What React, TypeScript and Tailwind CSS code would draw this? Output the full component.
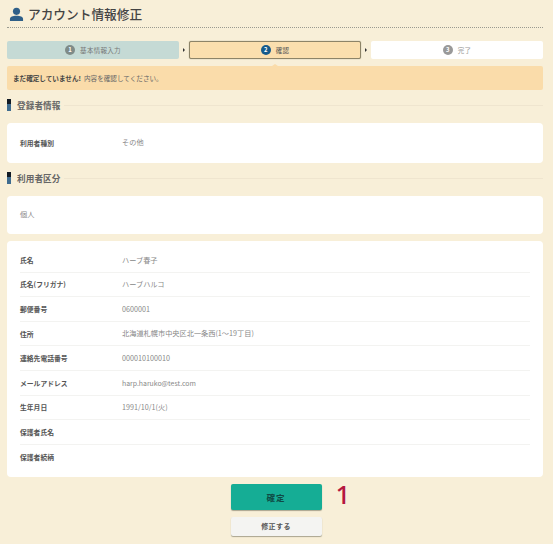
const font = { fontFamily: '"Noto Sans CJK JP", "Noto Sans", sans-serif' };

function Step({ n, label, cls, numCls, textCls }: { n: number; label: string; cls: string; numCls: string; textCls: string }) {
  return (
    <div className={`w-[172px] shrink-0 h-[18px] rounded-[2px] flex items-center justify-center gap-[5px] ${cls}`}>
      <span className={`w-[10px] h-[10px] rounded-full flex items-center justify-center text-white text-[6px] font-bold leading-none ${numCls}`}>{n}</span>
      <span className={`text-[6.5px] leading-none tracking-[0.3px] ${textCls}`}>{label}</span>
    </div>
  );
}

function Arrow() {
  return (
    <div className="w-[10px] flex items-center justify-center">
      <div className="w-0 h-0 border-y-[2px] border-y-transparent border-l-[2px] border-l-[#333]" />
    </div>
  );
}

function Section({ title, cls }: { title: string; cls: string }) {
  return (
    <div className={`flex items-center ${cls}`}>
      <div className="w-[4px] h-[12px] bg-gradient-to-b from-[#111a24] from-40% to-[#3f6c8f] to-45% mr-[6px]" />
      <span className="text-[8.6px] leading-none font-bold text-[#666] tracking-[0.1px]">{title}</span>
      <div className="flex-1 h-px bg-[#efe5cf] ml-[4px]" />
    </div>
  );
}

const rows: [string, string, string][] = [
  ['氏名', 'ハーブ春子', 'text-[7.2px]'],
  ['氏名(フリガナ)', 'ハーブハルコ', 'text-[7.2px]'],
  ['郵便番号', '0600001', 'text-[7.2px]'],
  ['住所', '北海道札幌市中央区北一条西(1～19丁目)', 'text-[7.2px]'],
  ['連絡先電話番号', '000010100010', 'text-[7.2px]'],
  ['メールアドレス', 'harp.haruko@test.com', 'text-[6.9px]'],
  ['生年月日', '1991/10/1(火)', 'text-[7.2px]'],
  ['保護者氏名', '', 'text-[7.2px]'],
  ['保護者続柄', '', 'text-[7.2px]'],
];

export default function App() {
  return (
    <div className="w-[553px] h-[544px] bg-[#f8efd8] overflow-hidden px-[7px] pr-[10px]" style={font}>
      <div className="h-[28px] flex items-center border-b border-dotted border-[#9a9a90] pt-[2px]">
        <svg viewBox="0 0 16 16" className="w-[15px] h-[15px] ml-[2px] mr-[4px] shrink-0">
          <circle cx="8" cy="4.6" r="3.8" fill="#2f5f88" />
          <path d="M1 15v-2.2C1 10.6 4 9.4 8 9.4s7 1.2 7 3.4V15z" fill="#2f5f88" />
        </svg>
        <span className="text-[12.7px] leading-none font-medium text-[#444]">アカウント情報修正</span>
      </div>
      <div className="flex mt-[13px]">
        <Step n={1} label="基本情報入力" cls="bg-[#c5dad5]" numCls="bg-[#7f8b88]" textCls="text-[#777]" />
        <Arrow />
        <Step n={2} label="確認" cls="bg-[#fbdfae] border border-[#8d8468] shadow-[0_0_1px_#8d8468]" numCls="bg-[#145a8c]" textCls="text-[#555]" />
        <Arrow />
        <Step n={3} label="完了" cls="bg-white" numCls="bg-[#999]" textCls="text-[#999]" />
      </div>
      <div className="relative mt-[7px] h-[24px] bg-[#fadcaa] rounded-[2px] flex items-center pl-[6px] text-[6.6px] leading-none text-[#666]">
        <div className="absolute -top-[2px] left-[265px] w-0 h-0 border-x-[3px] border-x-transparent border-b-[2px] border-b-[#fadcaa]" />
        <span className="font-bold text-[#444] mr-[3px]">まだ確定していません!</span>
        <span>内容を確認してください。</span>
      </div>
      <Section title="登録者情報" cls="mt-[9px]" />
      <div className="mt-[12px] h-[40px] bg-white rounded-[4px] flex items-center pl-[13px]">
        <span className="w-[102px] text-[6.8px] leading-none text-[#555] font-bold">利用者種別</span>
        <span className="text-[7.2px] leading-none text-[#888]">その他</span>
      </div>
      <Section title="利用者区分" cls="mt-[9px]" />
      <div className="mt-[12px] h-[38px] bg-white rounded-[4px] flex items-center pl-[13px]">
        <span className="text-[7.2px] leading-none text-[#888]">個人</span>
      </div>
      <div className="mt-[7px] h-[236px] bg-white rounded-[4px] px-[13px] pt-[7px]">
        {rows.map(([k, v, size], i) => (
          <div key={k} className={`h-[24.6px] pt-px flex items-center ${i < rows.length - 1 ? 'border-b border-[#f3f3f1]' : ''}`}>
            <span className="w-[102px] text-[6.8px] leading-none text-[#555] font-bold">{k}</span>
            <span className={`${size} leading-none text-[#888]`}>{v}</span>
          </div>
        ))}
      </div>
      <div className="relative w-[91px] mx-auto mt-[7px] translate-x-[1px]">
        <div className="h-[26px] bg-[#15ad95] rounded-[2px] shadow-[0_1px_1px_#a9a48f] flex items-center justify-center text-[8.5px] leading-none font-bold text-[#0f4a44] tracking-[1px]">確定</div>
        <div className="absolute left-[105px] top-[-7px] text-[26px] leading-[34px] font-medium text-[#b5173f]" style={{ fontFamily: '"Noto Sans", sans-serif' }}>1</div>
        <div className="mt-[7px] h-[19px] bg-[#f4f4f2] rounded-[2px] shadow-[0_1px_1px_#a9a48f] flex items-center justify-center text-[7px] leading-none text-[#555] font-bold tracking-[0.4px]">修正する</div>
      </div>
    </div>
  );
}
